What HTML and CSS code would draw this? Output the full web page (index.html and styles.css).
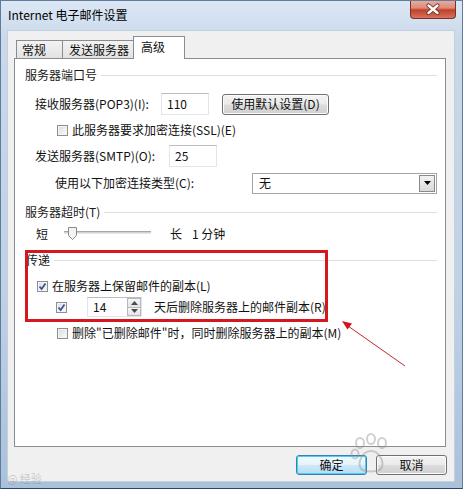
FILE: index.html
```html
<!DOCTYPE html>
<html lang="zh-CN">
<head>
    <meta charset="UTF-8">
    <meta name="viewport" content="width=device-width, initial-scale=1.0">
    <title>Internet 电子邮件设置</title>
    <link rel="stylesheet" href="styles.css">
</head>
<body>
    <div class="window">
        <div class="titlebar">
            <span class="title">Internet 电子邮件设置</span>
            <div class="close-btn">
                <svg width="44" height="17" viewBox="0 0 44 17">
                    <path d="M17.5 4.5 L26.5 12 M26.5 4.5 L17.5 12" stroke="#6a2a20" stroke-width="4.2" stroke-linecap="round"/>
                    <path d="M17.5 4.5 L26.5 12 M26.5 4.5 L17.5 12" stroke="#fff" stroke-width="2.4" stroke-linecap="round"/>
                </svg>
            </div>
        </div>

        <div class="client">
            <div class="tabs">
                <div class="tab tab-general">常规</div>
                <div class="tab tab-outgoing">发送服务器</div>
                <div class="tab tab-advanced active">高级</div>
            </div>

            <div class="panel">
                <!-- 服务器端口号 -->
                <div class="group-title title-ports"><span>服务器端口号</span></div>
                <div class="row row-pop3">
                    <span class="label label-pop3">接收服务器(POP3)(I):</span>
                    <div class="textbox port-box">110</div>
                    <button class="btn btn-defaults">使用默认设置(D)</button>
                </div>
                <div class="row row-ssl">
                    <span class="check"></span>
                    <span class="check-text">此服务器要求加密连接(SSL)(E)</span>
                </div>
                <div class="row row-smtp">
                    <span class="label label-smtp">发送服务器(SMTP)(O):</span>
                    <div class="textbox port-box">25</div>
                </div>
                <div class="row row-crypt">
                    <span class="label label-crypt">使用以下加密连接类型(C):</span>
                    <div class="select">
                        <span class="select-value">无</span>
                        <span class="select-arrow">
                            <svg width="7" height="4" viewBox="0 0 7 4"><path d="M0 0 H7 L3.5 4 Z" fill="#000"/></svg>
                        </span>
                    </div>
                </div>

                <!-- 服务器超时 -->
                <div class="group-title title-timeout"><span>服务器超时(T)</span></div>
                <div class="row row-slider">
                    <span class="slider-label">短</span>
                    <div class="slider">
                        <div class="slider-track"></div>
                        <svg class="slider-thumb" width="9" height="13" viewBox="0 0 9 13">
                            <path d="M0.5 0.5 H8.5 V8.5 L4.5 12.5 L0.5 8.5 Z" fill="#f4f4f4" stroke="#8a8a8a"/>
                        </svg>
                    </div>
                    <span class="slider-label long">长</span>
                    <span class="slider-value">1 分钟</span>
                </div>

                <!-- 传递 -->
                <div class="group-title title-delivery"><span>传递</span></div>
                <div class="row row-keep">
                    <span class="check checked">
                        <svg width="9" height="9" viewBox="0 0 9 9"><path d="M1.5 4.5 L3.6 7 L7.5 1.5" fill="none" stroke="#3d5192" stroke-width="1.7"/></svg>
                    </span>
                    <span class="check-text">在服务器上保留邮件的副本(L)</span>
                </div>
                <div class="row row-days">
                    <span class="check checked">
                        <svg width="9" height="9" viewBox="0 0 9 9"><path d="M1.5 4.5 L3.6 7 L7.5 1.5" fill="none" stroke="#3d5192" stroke-width="1.7"/></svg>
                    </span>
                    <div class="spinner">
                        <span class="spinner-value">14</span>
                        <div class="spin-buttons">
                            <span class="spin-btn"><svg width="7" height="4" viewBox="0 0 7 4"><path d="M0 4 H7 L3.5 0 Z" fill="#4a4a4a"/></svg></span>
                            <span class="spin-btn"><svg width="7" height="4" viewBox="0 0 7 4"><path d="M0 0 H7 L3.5 4 Z" fill="#4a4a4a"/></svg></span>
                        </div>
                    </div>
                    <span class="days-text">天后删除服务器上的邮件副本(R)</span>
                </div>
                <div class="row row-delete">
                    <span class="check"></span>
                    <span class="check-text">删除"已删除邮件"时，同时删除服务器上的副本(M)</span>
                </div>
            </div>

            <div class="buttons">
                <button class="btn btn-ok">确定</button>
                <button class="btn">取消</button>
            </div>
        </div>

        <!-- annotation overlays -->
        <div class="mark-box"></div>
        <svg class="mark-arrow" width="463" height="489" viewBox="0 0 463 489">
            <path d="M405 366 L348 326" stroke="#c3272d" stroke-width="1"/>
            <path d="M342 321 L352 323.5 L347.5 329.5 Z" fill="#d4141c"/>
        </svg>
        <svg class="wm-paw" width="44" height="44" viewBox="0 0 44 44">
            <g fill="none" stroke="rgba(150,150,150,0.45)" stroke-width="2">
                <ellipse cx="11" cy="10" rx="4" ry="5"/>
                <ellipse cx="22" cy="6" rx="4" ry="5"/>
                <ellipse cx="33" cy="10" rx="4" ry="5"/>
                <ellipse cx="6" cy="21" rx="3.5" ry="4.5"/>
                <path d="M22 18 C14 18 9 28 11 34 C13 40 31 40 33 34 C35 28 30 18 22 18 Z"/>
            </g>
        </svg>
        <div class="watermark wm-left">@ 经验</div>
    </div>
</body>
</html>
```

FILE: styles.css
```css
body {
    margin: 0;
    padding: 0;
    background-color: #fff;
    font-family: "Noto Sans CJK SC", "Liberation Sans", sans-serif;
    font-size: 12px;
    color: #111;
}

.window {
    position: relative;
    width: 463px;
    height: 489px;
    box-sizing: border-box;
    border: 1px solid #5f7c9c;
    border-bottom-color: #2c4668;
    background: linear-gradient(to bottom, #dce7f4 0%, #c9d9eb 8%, #bfd1e5 60%, #aac1da 100%);
    overflow: hidden;
}

.titlebar {
    height: 29px;
    display: flex;
    justify-content: space-between;
    align-items: flex-start;
    padding-left: 7px;
}

.title {
    margin-top: 6px;
    line-height: 16px;
    font-size: 12px;
    color: #000;
}

.close-btn {
    width: 46px;
    height: 19px;
    margin-top: -1px;
    margin-right: 6px;
    box-sizing: border-box;
    border: 1px solid #7a3227;
    border-top: none;
    border-radius: 0 0 4px 4px;
    background: linear-gradient(to bottom, #eab0a2 0%, #dc8a77 45%, #c0402b 55%, #d8735c 100%);
    display: flex;
    justify-content: center;
    align-items: center;
}

.client {
    margin: 0 7px 0 6px;
    height: 452px;
    box-sizing: border-box;
    padding: 6px 8px 0 7px;
    background-color: #f0f0f0;
    box-shadow: inset 0 0 0 1px #c3d0de;
}

/* tabs */
.tabs {
    display: flex;
    align-items: flex-start;
    height: 22px;
    padding-left: 2px;
}

.tab {
    box-sizing: border-box;
    height: 18px;
    margin-top: 4px;
    border: 1px solid #898c95;
    border-bottom: none;
    background: linear-gradient(to bottom, #f3f3f3, #e2e2e2);
    line-height: 17px;
    white-space: nowrap;
}

.tab + .tab {
    margin-left: -1px;
}

.tab-general {
    width: 47px;
    padding-left: 5px;
}

.tab-outgoing {
    width: 72px;
    padding-left: 6px;
}

.tab-advanced {
    width: 52px;
    padding-left: 7px;
}

.tab.active {
    position: relative;
    z-index: 1;
    height: 23px;
    margin-top: 0;
    margin-bottom: -1px;
    padding-top: 2px;
    line-height: 16px;
    background: #fff;
}

/* panel */
.panel {
    width: 432px;
    height: 389px;
    box-sizing: border-box;
    border: 1px solid #898c95;
    background-color: #fff;
    padding: 6px 8px 0 10px;
}

.group-title {
    display: flex;
    align-items: center;
    height: 20px;
    line-height: 16px;
    color: #1a1a1a;
}

.group-title::after {
    content: "";
    flex: 1;
    height: 1px;
    margin-left: 4px;
    background-color: #d5dfe5;
}

.title-timeout {
    margin-top: 9px;
}

.title-delivery {
    margin-top: 6px;
    padding-left: 1px;
}

.row {
    display: flex;
    align-items: center;
    height: 20px;
    line-height: 16px;
    white-space: nowrap;
}

.row-pop3 {
    height: 22px;
    margin-top: 8px;
    padding-left: 10px;
}

.row-ssl {
    margin-top: 5px;
    padding-left: 32px;
}

.row-smtp {
    height: 22px;
    margin-top: 5px;
    padding-left: 10px;
}

.row-crypt {
    margin-top: 6px;
    padding-left: 30px;
}

.row-slider {
    margin-top: 2px;
    padding-left: 11px;
}

.row-keep {
    margin-top: 6px;
    padding-left: 12px;
}

.row-days {
    margin-top: 1px;
    padding-left: 31px;
}

.row-delete {
    margin-top: 6px;
    padding-left: 32px;
}

.label-pop3 {
    width: 126px;
}

.label-smtp {
    width: 134px;
}

.label-crypt {
    width: 197px;
}

/* text boxes */
.textbox {
    box-sizing: border-box;
    height: 22px;
    border: 1px solid #e2e6eb;
    border-top-color: #b9bcc3;
    background-color: #fff;
    padding-left: 5px;
    line-height: 20px;
}

.port-box {
    width: 48px;
}

/* buttons */
.btn {
    box-sizing: border-box;
    height: 21px;
    border: 1px solid #707070;
    border-radius: 3px;
    background: linear-gradient(to bottom, #f3f3f3 0%, #ebebeb 48%, #dddddd 52%, #cfcfcf 100%);
    box-shadow: inset 0 0 0 1px #fcfcfc;
    font-family: inherit;
    font-size: 12px;
    color: #111;
    padding: 0;
    line-height: 18px;
}

.btn-defaults {
    width: 107px;
    margin-left: 13px;
}

.buttons {
    display: flex;
    justify-content: flex-end;
    gap: 9px;
    margin-top: 8px;
}

.buttons .btn {
    width: 71px;
    height: 20px;
}

.btn-ok {
    border-color: #3c7fb1;
    background: linear-gradient(to bottom, #f2f9fd 0%, #e6f3fb 48%, #cfe8f7 52%, #b8dcf3 100%);
    box-shadow: inset 0 0 0 1px #48d0f8;
}

/* checkboxes */
.check {
    box-sizing: border-box;
    width: 11px;
    height: 11px;
    border: 1px solid #8e8f8f;
    background: linear-gradient(135deg, #dcdcdc, #fbfbfb);
    box-shadow: inset 0 0 0 1px #f4f4f4;
    display: flex;
    justify-content: center;
    align-items: center;
    flex-shrink: 0;
}

.check.checked {
    background: linear-gradient(135deg, #d8dde6, #f7f9fc);
}

.check-text {
    margin-left: 4px;
}

/* select */
.select {
    box-sizing: border-box;
    width: 185px;
    height: 21px;
    border: 1px solid #a5a5a5;
    background-color: #fff;
    display: flex;
    align-items: center;
    justify-content: space-between;
    padding: 0 1px 0 6px;
}

.select-arrow {
    box-sizing: border-box;
    width: 16px;
    height: 17px;
    border: 1px solid #8a8a8a;
    background: linear-gradient(to bottom, #f2f2f2, #d9d9d9);
    display: flex;
    justify-content: center;
    align-items: center;
}

/* slider */
.slider-label {
    width: 12px;
}

.slider {
    position: relative;
    width: 87px;
    height: 20px;
    margin-left: 16px;
}

.slider-track {
    margin-top: 7px;
    height: 1px;
    border-top: 1px solid #a8a8a8;
    border-bottom: 1px solid #e6e6e6;
    background-color: #d2d2d2;
}

.slider-thumb {
    position: absolute;
    left: 4px;
    top: 3px;
}

.slider-label.long {
    margin-left: 19px;
}

.slider-value {
    margin-left: 10px;
}

/* spinner */
.spinner {
    box-sizing: border-box;
    width: 55px;
    height: 20px;
    margin-left: 20px;
    border: 1px solid #e2e6eb;
    border-top-color: #b9bcc3;
    display: flex;
    justify-content: space-between;
}

.spinner-value {
    padding-left: 5px;
    line-height: 18px;
}

.spin-buttons {
    width: 14px;
    display: flex;
    flex-direction: column;
}

.spin-btn {
    flex: 1;
    box-sizing: border-box;
    border: 1px solid #b4b8c0;
    background: linear-gradient(to bottom, #f6f6f6, #e4e4e4);
    display: flex;
    justify-content: center;
    align-items: center;
}

.spin-btn + .spin-btn {
    border-top: none;
}

.days-text {
    margin-left: 12px;
}

/* annotations */
.mark-box {
    position: absolute;
    left: 24px;
    top: 249px;
    width: 303px;
    height: 72px;
    box-sizing: border-box;
    border: 3px solid #d6171e;
}

.mark-arrow {
    position: absolute;
    left: -1px;
    top: -1px;
    pointer-events: none;
}

.wm-paw {
    position: absolute;
    left: 348px;
    top: 432px;
    pointer-events: none;
}

.watermark {
    position: absolute;
    white-space: nowrap;
}

.wm-left {
    left: 6px;
    top: 470px;
    font-size: 11px;
    line-height: 14px;
    color: rgba(120, 120, 120, 0.35);
}
```
